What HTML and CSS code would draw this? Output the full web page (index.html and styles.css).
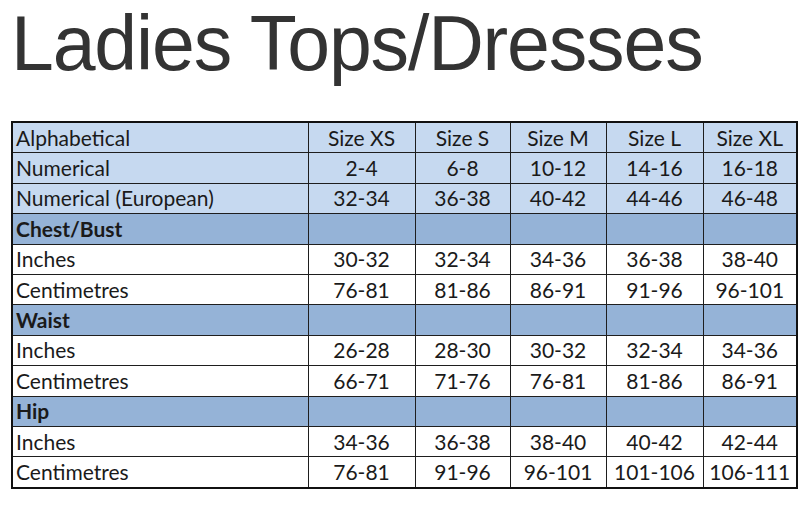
FILE: index.html
```html
<!DOCTYPE html>
<html>
<head>
<meta charset="utf-8">
<link rel="stylesheet" href="styles.css">
</head>
<body>
<h1 class="title">Ladies Tops/Dresses</h1>
<table class="chart">
  <colgroup>
    <col class="c-label"><col class="c-xs"><col class="c-s"><col class="c-m"><col class="c-l"><col class="c-xl">
  </colgroup>
  <tr class="hdr"><td>Alphabetical</td><td>Size XS</td><td>Size S</td><td>Size M</td><td>Size L</td><td>Size XL</td></tr>
  <tr class="hdr"><td>Numerical</td><td>2-4</td><td>6-8</td><td>10-12</td><td>14-16</td><td>16-18</td></tr>
  <tr class="hdr"><td>Numerical (European)</td><td>32-34</td><td>36-38</td><td>40-42</td><td>44-46</td><td>46-48</td></tr>
  <tr class="sec"><td>Chest/Bust</td><td></td><td></td><td></td><td></td><td></td></tr>
  <tr><td>Inches</td><td>30-32</td><td>32-34</td><td>34-36</td><td>36-38</td><td>38-40</td></tr>
  <tr><td>Centimetres</td><td>76-81</td><td>81-86</td><td>86-91</td><td>91-96</td><td>96-101</td></tr>
  <tr class="sec"><td>Waist</td><td></td><td></td><td></td><td></td><td></td></tr>
  <tr><td>Inches</td><td>26-28</td><td>28-30</td><td>30-32</td><td>32-34</td><td>34-36</td></tr>
  <tr><td>Centimetres</td><td>66-71</td><td>71-76</td><td>76-81</td><td>81-86</td><td>86-91</td></tr>
  <tr class="sec"><td>Hip</td><td></td><td></td><td></td><td></td><td></td></tr>
  <tr><td>Inches</td><td>34-36</td><td>36-38</td><td>38-40</td><td>40-42</td><td>42-44</td></tr>
  <tr><td>Centimetres</td><td>76-81</td><td>91-96</td><td>96-101</td><td>101-106</td><td>106-111</td></tr>
</table>
</body>
</html>
```

FILE: styles.css
```css
html, body {
  margin: 0;
  padding: 0;
  background: #ffffff;
}
.title {
  margin: 5px 0 0 11px;
  font-family: "Liberation Sans", Arial, sans-serif;
  font-weight: normal;
  font-size: 77px;
  line-height: 77px;
  color: #333333;
  letter-spacing: -1.15px;
}
.chart {
  margin: 39px 0 0 11px;
  border-collapse: collapse;
  table-layout: fixed;
  width: 787px;
  border: 2px solid #111;
  font-family: Lato, "Open Sans", sans-serif;
  font-size: 21px;
  color: #1a1a1a;
}
.c-label { width: 296px; }
.c-xs { width: 107px; }
.c-s { width: 95px; }
.c-m { width: 96px; }
.c-l { width: 97px; }
.c-xl { width: 94px; }
.chart td {
  height: 29.4px;
  padding: 0 3px;
  border: 1.5px solid #1e1e1e;
  text-align: center;
  vertical-align: middle;
  line-height: 28px;
  white-space: nowrap;
}
.chart td:first-child {
  text-align: left;
}
.hdr td {
  background: #c6d9f0;
}
.sec td {
  background: #95b3d7;
  font-weight: bold;
}
```
